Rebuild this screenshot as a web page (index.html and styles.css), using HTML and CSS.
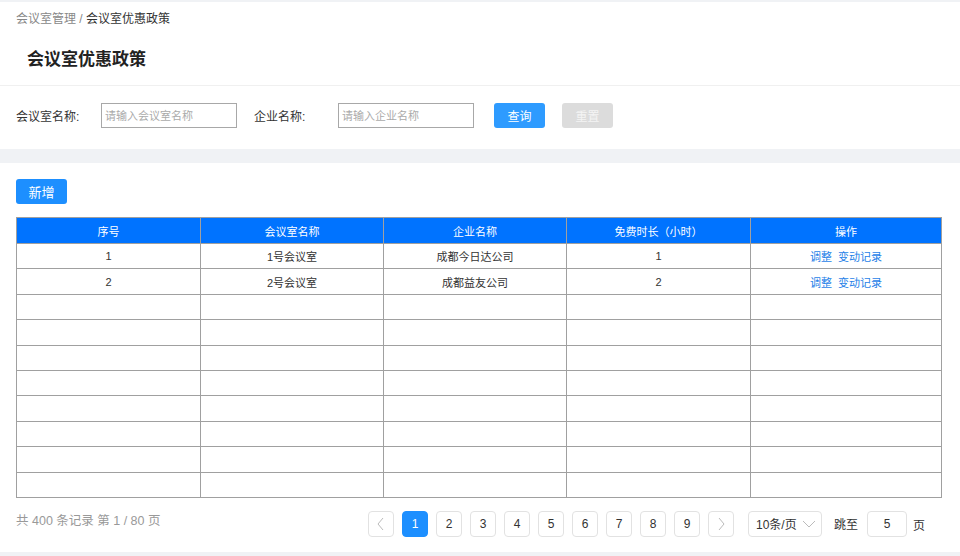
FILE: index.html
```html
<!DOCTYPE html>
<html lang="zh-CN">
<head>
<meta charset="utf-8">
<title>会议室优惠政策</title>
<link rel="stylesheet" href="styles.css">
</head>
<body>
<div class="top-panel">
  <div class="breadcrumb"><span class="crumb-parent">会议室管理 / </span><span class="crumb-current">会议室优惠政策</span></div>
  <h1 class="page-title">会议室优惠政策</h1>
  <div class="search-row">
    <label class="search-label label-room">会议室名称:</label>
    <input class="search-input" type="text" placeholder="请输入会议室名称">
    <label class="search-label label-company">企业名称:</label>
    <input class="search-input" type="text" placeholder="请输入企业名称">
    <button class="btn btn-query">查询</button>
    <button class="btn btn-reset">重置</button>
  </div>
</div>
<div class="main-panel">
  <button class="btn btn-add">新增</button>
  <table class="data-table">
    <colgroup>
      <col class="c1"><col class="c2"><col class="c3"><col class="c4"><col class="c5">
    </colgroup>
    <thead>
      <tr><th>序号</th><th>会议室名称</th><th>企业名称</th><th>免费时长（小时）</th><th>操作</th></tr>
    </thead>
    <tbody>
      <tr><td>1</td><td>1号会议室</td><td>成都今日达公司</td><td>1</td><td><a class="op">调整</a><a class="op">变动记录</a></td></tr>
      <tr><td>2</td><td>2号会议室</td><td>成都益友公司</td><td>2</td><td><a class="op">调整</a><a class="op">变动记录</a></td></tr>
      <tr><td></td><td></td><td></td><td></td><td></td></tr>
      <tr><td></td><td></td><td></td><td></td><td></td></tr>
      <tr><td></td><td></td><td></td><td></td><td></td></tr>
      <tr><td></td><td></td><td></td><td></td><td></td></tr>
      <tr><td></td><td></td><td></td><td></td><td></td></tr>
      <tr><td></td><td></td><td></td><td></td><td></td></tr>
      <tr><td></td><td></td><td></td><td></td><td></td></tr>
      <tr><td></td><td></td><td></td><td></td><td></td></tr>
    </tbody>
  </table>
  <div class="footer-row">
    <div class="total">共 400 条记录 第 1 / 80 页</div>
    <div class="pager">
      <span class="pg pg-arrow"><svg width="10" height="14" viewBox="0 0 10 14"><path d="M7 1 L2 7 L7 13" fill="none" stroke="#bbb" stroke-width="1"/></svg></span>
      <span class="pg active">1</span>
      <span class="pg">2</span>
      <span class="pg">3</span>
      <span class="pg">4</span>
      <span class="pg">5</span>
      <span class="pg">6</span>
      <span class="pg">7</span>
      <span class="pg">8</span>
      <span class="pg">9</span>
      <span class="pg pg-arrow"><svg width="10" height="14" viewBox="0 0 10 14"><path d="M3 1 L8 7 L3 13" fill="none" stroke="#bbb" stroke-width="1"/></svg></span>
      <span class="size-select">10条/页<svg width="14" height="8" viewBox="0 0 14 8"><path d="M1 1 L7 7 L13 1" fill="none" stroke="#bbb" stroke-width="1"/></svg></span>
      <span class="jump-label">跳至</span>
      <span class="jump-input">5</span>
      <span class="jump-unit">页</span>
    </div>
  </div>
</div>
</body>
</html>
```
FILE: styles.css
```css
* { box-sizing: border-box; }
html, body { margin: 0; padding: 0; }
body {
  background: #f0f2f5;
  font-family: "Liberation Sans", "Noto Sans CJK SC", sans-serif;
  font-size: 12px;
  color: #333;
  height: 556px;
  overflow: hidden;
}
.top-panel {
  margin-top: 2px;
  background: #fff;
  height: 147px;
}
.breadcrumb {
  padding: 9px 0 0 16px;
  height: 27px;
  font-size: 12px;
  line-height: 16px;
}
.crumb-parent { color: #888; }
.crumb-current { color: #333; }
.page-title {
  margin: 0;
  padding: 15px 0 0 27px;
  height: 57px;
  line-height: 32px;
  font-size: 17px;
  font-weight: bold;
  color: #222;
  border-bottom: 1px solid #f0f0f0;
}
.search-row {
  display: flex;
  align-items: center;
  padding: 17px 0 0 16px;
}
.search-label {
  font-size: 12px;
  color: #333;
}
.label-room { width: 85px; }
.label-company { width: 84px; margin-left: 17px; }
.search-input {
  width: 136px;
  height: 25px;
  border: 1px solid #a8a8a8;
  padding: 0 3px;
  font-family: inherit;
  font-size: 11px;
  color: #333;
  outline: none;
}
.search-input::placeholder { color: #aaa; }
.btn {
  height: 25px;
  width: 51px;
  border: none;
  border-radius: 3px;
  font-family: inherit;
  font-size: 12px;
  color: #fff;
  padding: 0;
}
.btn-query { background: #2e9bff; margin-left: 20px; }
.btn-reset { background: #dcdcdc; margin-left: 17px; color: #f4f4f4; }
.main-panel {
  margin-top: 14px;
  background: #fff;
  height: 389px;
  padding: 16px 19px 0 16px;
}
.btn-add {
  display: block;
  background: #1d8fff;
  font-size: 13px;
}
.data-table {
  margin-top: 13px;
  width: 925px;
  border-collapse: collapse;
  table-layout: fixed;
  font-size: 11px;
}
.c1 { width: 184px; }
.c2 { width: 183px; }
.c3 { width: 183px; }
.c4 { width: 184px; }
.c5 { width: 191px; }
.data-table th,
.data-table td {
  border: 1px solid #a0a0a0;
  text-align: center;
  padding: 0;
}
.data-table th {
  background: #0073ff;
  color: #fff;
  font-weight: normal;
  height: 26px;
}
.data-table td {
  height: 25.4px;
  color: #333;
}
.op {
  color: #1f7fe8;
  margin: 0 3px;
  cursor: pointer;
}
.footer-row {
  display: flex;
  justify-content: space-between;
  align-items: center;
  margin-top: 13px;
}
.total {
  color: #999;
  font-size: 12.5px;
  align-self: flex-start;
  margin-top: -1px;
}
.pager {
  display: flex;
  align-items: center;
  gap: 8px;
  margin-right: 16px;
}
.pg {
  width: 26px;
  height: 26px;
  border: 1px solid #e2e2e2;
  border-radius: 4px;
  display: flex;
  align-items: center;
  justify-content: center;
  font-size: 12px;
  color: #333;
}
.pg.active {
  background: #1d8fff;
  border-color: #1d8fff;
  color: #fff;
}
.size-select {
  margin-left: 6px;
  width: 74px;
  height: 26px;
  border: 1px solid #e2e2e2;
  border-radius: 4px;
  display: flex;
  align-items: center;
  justify-content: space-between;
  padding: 0 5px 0 7px;
  font-size: 12px;
  color: #333;
}
.jump-label { margin-left: 4px; font-size: 12px; color: #333; }
.jump-input {
  margin-left: 1px;
  width: 40px;
  height: 26px;
  border: 1px solid #e2e2e2;
  border-radius: 4px;
  display: flex;
  align-items: center;
  justify-content: center;
  font-size: 12px;
}
.jump-unit { margin-left: -2px; font-size: 12px; color: #333; padding-top: 2px; }
```
